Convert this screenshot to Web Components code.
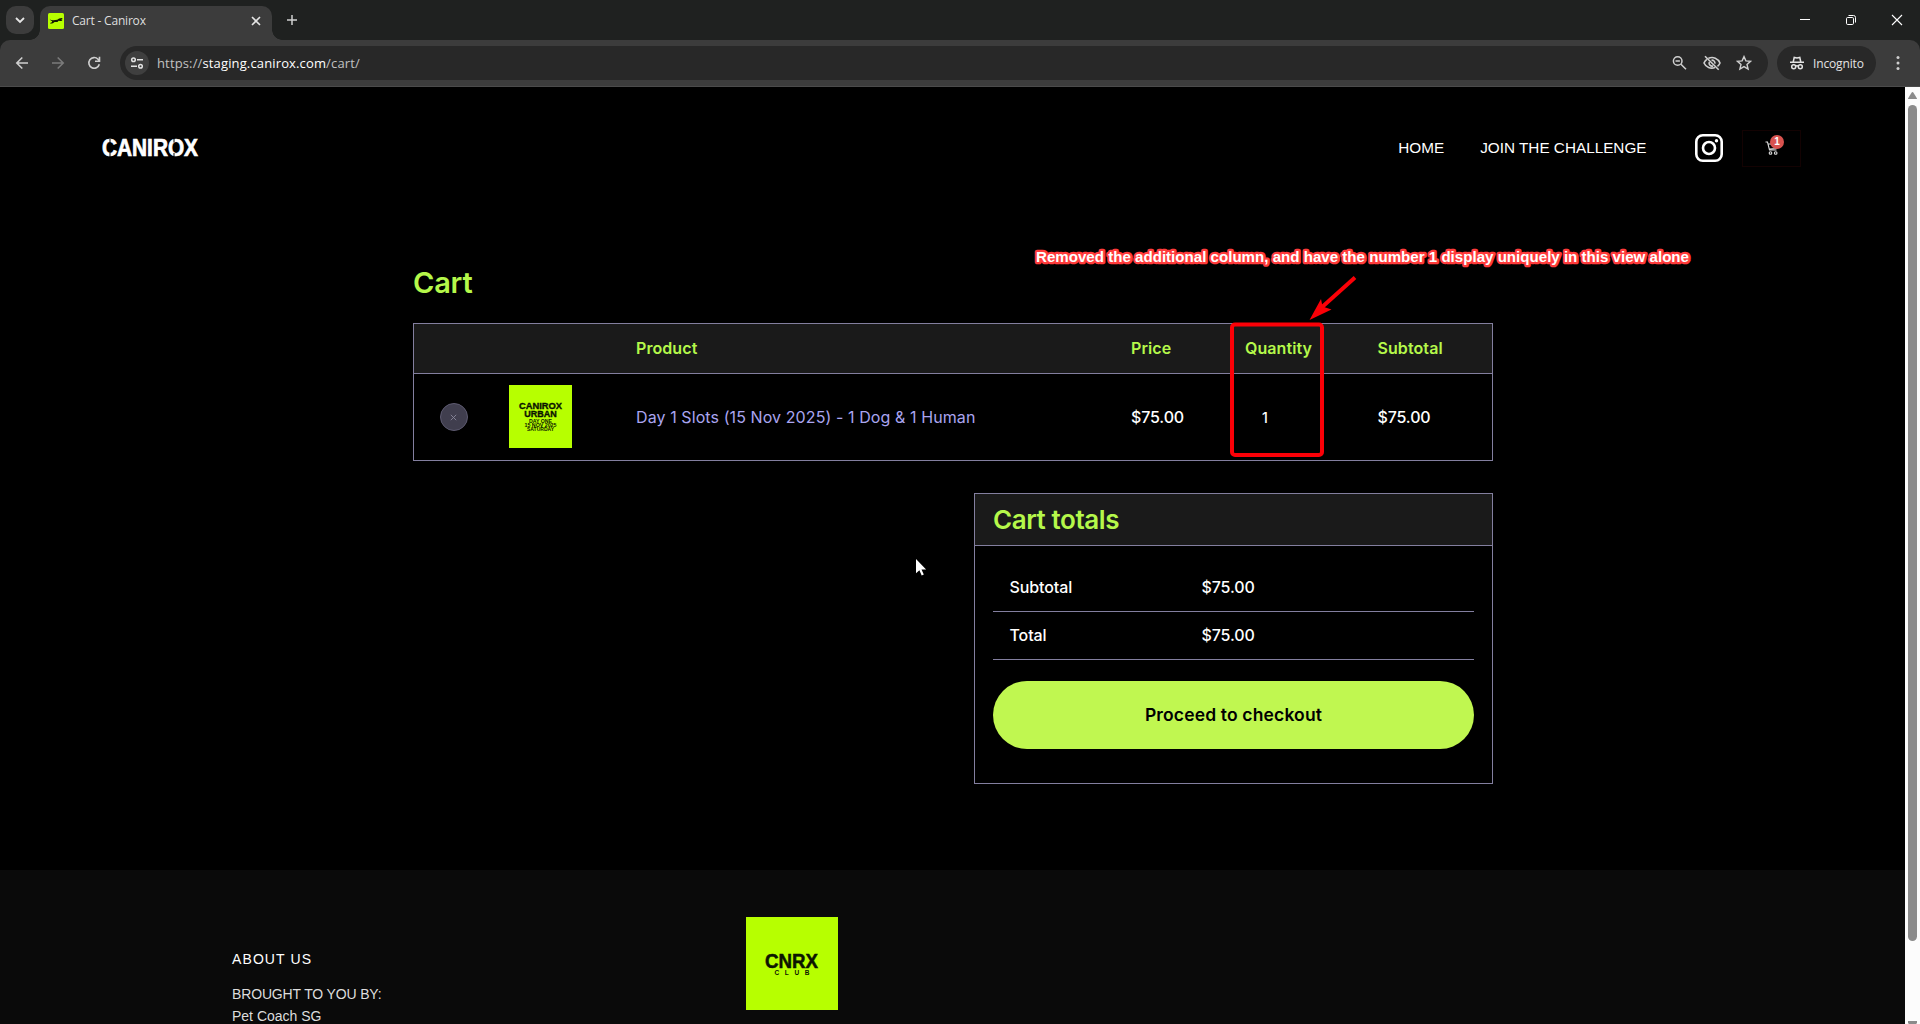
<!DOCTYPE html>
<html lang="en">
<head>
<meta charset="utf-8">
<title>Cart - Canirox</title>
<style>
html,body{margin:0;height:100%;overflow:hidden;background:#000}
body{width:1920px;height:1024px}
</style>
</head>
<body>
<canirox-app></canirox-app>
<script>
const define=(name,html)=>{
  const t=document.createElement('template');
  t.innerHTML=html;
  customElements.define(name,class extends HTMLElement{
    constructor(){super();this.attachShadow({mode:'open'}).append(t.content.cloneNode(true));}
  });
};

define('browser-tabs',`
<style>
:host{display:flex;height:40px;background:#1f2120;align-items:flex-start;position:relative;color:#dfdfdf}
.menu{width:28px;height:28px;margin:6px 6px 0 6px;border-radius:10px;background:#3c3c3c;display:flex;align-items:center;justify-content:center}
.tab{margin-top:6px;width:232px;height:34px;background:#3c3c3c;border-radius:10px 10px 0 0;display:flex;align-items:center;position:relative;box-sizing:border-box;padding:0 10px 5px 8px}
.tab:before,.tab:after{content:"";position:absolute;bottom:0;width:10px;height:10px}
.tab:before{left:-10px;background:radial-gradient(circle at 0 0,transparent 9.5px,#3c3c3c 10px)}
.tab:after{right:-10px;background:radial-gradient(circle at 100% 0,transparent 9.5px,#3c3c3c 10px)}
.title{font:12px "Open Sans",sans-serif;margin-left:8px;flex:1;letter-spacing:-.2px}
.plus{margin:14px 0 0 14px}
.win{margin-left:auto;display:flex;gap:34px;padding:12px 17px 0 0}
svg{display:block}
</style>
<div class="menu"><svg width="12" height="12" fill="none" stroke="#e6e6e6" stroke-width="1.8"><path d="M2 4l4 4 4-4"/></svg></div>
<div class="tab">
<svg width="16" height="16"><rect width="16" height="16" rx="1.5" fill="#b7ff00"/><path fill="#101800" d="M1.500 5.500l1.300 1.500 2.500.2 4-.5 1.800-1.200 2.700-.4 1 1-1.600.7 1.300 1.100-2.100.1-1.800-.2-1.100 1.300-2.900-.1-1.700 1.200-2.600.6.200-1 1.400-.5.300-1.100-1.500-.7z"/></svg>
<span class="title">Cart - Canirox</span>
<svg width="12" height="12" stroke="#e4e4e4" stroke-width="1.6"><path d="M2 2l8 8M10 2l-8 8"/></svg>
</div>
<svg class="plus" width="12" height="12" stroke="#d0d0d0" stroke-width="1.5"><path d="M6 1v10M1 6h10"/></svg>
<div class="win">
<svg width="14" height="16"><path d="M3 7.500h10" stroke="#fff"/></svg>
<svg width="12" height="16" fill="none" stroke="#fff"><rect x="1.5" y="5.5" width="7" height="7" rx="1.2"/><path d="M3.5 3.5h5a2 2 0 0 1 2 2v5"/></svg>
<svg width="12" height="16" stroke="#fff" stroke-width="1.1"><path d="M1 3l10 10M11 3L1 13"/></svg>
</div>`);

define('browser-toolbar',`
<style>
:host{display:flex;box-sizing:border-box;height:47px;background:#3c3c3c;border-bottom:1px solid #4b4b4b;border-radius:10px 10px 0 0;align-items:center;padding:0 20px 0 15px;color:#e3e3e3;font:13px "Open Sans",sans-serif}
.nav{display:flex;gap:22px;width:105px}
.omni{flex:1;height:34px;border-radius:17px;background:#282828;display:flex;align-items:center;padding:0 16px 0 5px}
.info{width:24px;height:24px;border-radius:50%;background:#3f3f3f;display:flex;align-items:center;justify-content:center}
.url{margin-left:8px;flex:1;color:#c1c1c1;white-space:nowrap;letter-spacing:.14px}
.url b{font-weight:400;color:#fff}
.acts{display:flex;gap:15.500px}
.inc{margin-left:9px;width:99px;height:34px;border-radius:17px;background:#282828;display:flex;align-items:center;box-sizing:border-box;padding-left:12px;gap:8px;font-size:12px;letter-spacing:-.15px}
.dots{margin-left:20px}
svg{display:block}
</style>
<div class="nav">
<svg width="14" height="14" fill="none" stroke="#cfcfcf" stroke-width="1.6"><path d="M13 7H2M7.3 1.5L1.8 7l5.5 5.5"/></svg>
<svg width="14" height="14" fill="none" stroke="#7b7b7b" stroke-width="1.6"><path d="M1 7h11M6.700 1.500L12.200 7l-5.500 5.500"/></svg>
<svg width="14" height="14" fill="none" stroke="#cfcfcf" stroke-width="1.6"><path d="M12.300 8.200A5.300 5.300 0 1 1 11 3.200L12.500 4.700M12.500 .8v4.400H8"/></svg>
</div>
<div class="omni">
<div class="info"><svg width="14" height="14" fill="none" stroke="#e3e3e3" stroke-width="1.5"><circle cx="3.500" cy="3.800" r="1.800"/><path d="M7 3.800h6M1 10.200h6"/><circle cx="10.500" cy="10.200" r="1.800"/></svg></div>
<div class="url">https://<b>staging.canirox.com</b>/cart/</div>
<div class="acts">
<svg width="15" height="16" fill="none" stroke="#cfcfcf" stroke-width="1.500"><circle cx="5.700" cy="6" r="4.300"/><path d="M9 9.300l5 5M3.500 6h4.400"/></svg>
<svg width="18" height="16" fill="none" stroke="#cfcfcf" stroke-width="1.600"><path d="M5.500 3.300A8.500 8.500 0 0 1 17 8a9 9 0 0 1-2.500 3.300M12 12.500A8.500 8.500 0 0 1 1 8a9 9 0 0 1 2.800-3.600M2 1.200l13.700 13.600"/><path d="M8.500 5.200a3 3 0 0 1 3.400 3.400M6.300 7a3 3 0 0 0 3.800 3.900"/></svg>
<svg width="16" height="16" fill="none" stroke="#cfcfcf" stroke-width="1.400"><path d="M8 1.600l1.900 4.300 4.600.4-3.500 3.100 1.100 4.600L8 11.600 3.900 14 5 9.400 1.500 6.300l4.600-.4z"/></svg>
</div>
</div>
<div class="inc"><svg width="16" height="16" fill="none" stroke="#e3e3e3" stroke-width="1.500"><path d="M1 7.300h14M4.200 7l1-4.500 2.800.6 2.800-.6 1 4.500"/><circle cx="4.700" cy="11.700" r="2"/><circle cx="11.300" cy="11.700" r="2"/><path d="M6.700 11.200q1.300-.8 2.600 0"/></svg><span>Incognito</span></div>
<svg class="dots" width="4" height="16" fill="#cfcfcf"><circle cx="2" cy="2.500" r="1.500"/><circle cx="2" cy="8" r="1.500"/><circle cx="2" cy="13.500" r="1.500"/></svg>`);

define('site-header',`
<style>
:host{display:flex;align-items:center;box-sizing:border-box;height:122px;padding:0 104px 0 98px;color:#fff}
.brand{flex:1;display:flex}
.menu{display:flex;gap:36px;font:15.300px "Liberation Sans",Arial,sans-serif;white-space:nowrap}
.ig{margin-left:47.500px}
.cart{margin-left:18px;width:59px;height:37px;border:1px solid #130202;box-sizing:border-box;position:relative;display:flex;justify-content:center;align-items:center}
.badge{position:absolute;left:27px;top:4px;width:14px;height:14px;border-radius:50%;background:#d9534f;font:bold 10px/13px "Liberation Sans",Arial,sans-serif;text-align:center}
svg{display:block}
</style>
<div class="brand"><svg width="110" height="40"><text x="4" y="28.200" textLength="96" lengthAdjust="spacingAndGlyphs" font-family="Liberation Sans" font-weight="700" font-size="23" fill="#fff" stroke="#fff" stroke-width=".7">CANIROX</text><path stroke="#000" stroke-width="1" d="M12 11v3.500M12 25v4M76 11v3.500M76 25v4"/></svg></div>
<div class="menu"><span>HOME</span><span>JOIN THE CHALLENGE</span></div>
<svg class="ig" width="30" height="30" fill="none" stroke="#fff" stroke-width="2.600"><rect x="2.300" y="2.300" width="25.400" height="25.400" rx="6.500"/><circle cx="15" cy="15" r="6"/><circle cx="22.500" cy="7.800" r="1.700" fill="#fff" stroke="none"/></svg>
<div class="cart"><svg width="14" height="14" fill="none" stroke="#ddd" stroke-width="1.100"><path d="M.5 1h2l2 8h7M3 3h9.500l-1.300 4.500L4.300 8"/><circle cx="5.500" cy="12" r="1.300"/><circle cx="10.700" cy="12" r="1.300"/></svg><span class="badge">1</span></div>`);

define('slot-poster',`
<style>
:host{display:block;width:63px;height:63px;background:#b7ff00;margin-top:-1px}
svg{display:block}
text{font-family:"Liberation Sans",Arial,sans-serif;font-weight:700;fill:#0b1400;text-anchor:middle}
</style>
<svg width="63" height="63"><g stroke="#0b1400" stroke-width=".35"><text x="31.500" y="23.700" font-size="9" textLength="43" lengthAdjust="spacingAndGlyphs">CANIROX</text><text x="31.500" y="32.200" font-size="9" textLength="32.500" lengthAdjust="spacingAndGlyphs">URBAN</text></g><text x="31.500" y="37.700" font-size="4.900" textLength="23" lengthAdjust="spacingAndGlyphs">DAY ONE</text><text x="31.500" y="42" font-size="4.900" textLength="32" lengthAdjust="spacingAndGlyphs">15 NOV 2025</text><text x="31.500" y="46.400" font-size="4.900" textLength="27" lengthAdjust="spacingAndGlyphs">SATURDAY</text></svg>`);

define('cart-table',`
<style>
:host{display:block;box-sizing:border-box;width:1080px;border:1px solid #837f9f;font:500 16px Inter,sans-serif;color:#fff}
.row{display:grid;grid-template-columns:95px 127px 495px 114px 132.500px 1fr;align-items:center}
.head{box-sizing:border-box;height:50px;padding-bottom:1px;background:#1a1a1a;border-bottom:1px solid #837f9f;color:#b5f84a;font-weight:600;letter-spacing:.08px}
.body{height:86px}
.price{letter-spacing:-.15px}
.x{margin-left:25.500px;width:28px;height:28px;border-radius:50%;box-sizing:border-box;border:1px solid #5d5a70;background:#403e4e;display:flex;align-items:center;justify-content:center}
.name{color:#aaa5f0;font-weight:400;letter-spacing:.09px}
.qty{padding-left:17px;font-size:14px}
</style>
<div class="row head"><i></i><i></i><span>Product</span><span>Price</span><span>Quantity</span><span>Subtotal</span></div>
<div class="row body"><div class="x"><svg width="7" height="7" stroke="#8a889b" stroke-width=".9"><path d="M.8 .8l5.400 5.400M6.200 .8L.8 6.200"/></svg></div><slot-poster></slot-poster><span class="name">Day 1 Slots (15 Nov 2025) - 1 Dog &amp; 1 Human</span><span class="price">$75.00</span><span class="qty">1</span><span class="price">$75.00</span></div>`);

define('total-row',`
<style>
:host{display:grid;box-sizing:border-box;grid-template-columns:192px 1fr;align-items:center;height:48px;padding:0 0 2px 16.500px;border-bottom:1px solid #837f9f;font:500 16px Inter,sans-serif;color:#fff;letter-spacing:-.1px}
</style><slot name="label"></slot><slot></slot>`);

define('cart-totals',`
<style>
:host{display:block;box-sizing:border-box;width:519px;height:291px;border:1px solid #837f9f}
h2{margin:0;box-sizing:border-box;height:52px;padding-left:18px;background:#1a1a1a;border-bottom:1px solid #837f9f;font:600 26px/52px Inter,sans-serif;color:#b5f84a;letter-spacing:-.42px}
.in{padding:18px 18px 0}
.btn{margin-top:21px;height:68px;border-radius:34px;background:#c0f750;color:#000;font:600 17.500px/68px Inter,sans-serif;letter-spacing:.15px;text-align:center}
</style>
<h2>Cart totals</h2>
<div class="in"><total-row><span slot="label">Subtotal</span>$75.00</total-row><total-row><span slot="label">Total</span>$75.00</total-row><div class="btn">Proceed to checkout</div></div>`);

define('site-footer',`
<style>
:host{display:flex;height:154px;background:#0a0a0a;overflow:hidden;color:#fff;font:14px/22px "Liberation Sans",Arial,sans-serif}
.about{margin-left:232px;width:514px;padding-top:78px}
h3{margin:0 0 13px;font:400 14px/22px "Liberation Sans",Arial,sans-serif;letter-spacing:1.100px}
p{margin:0;color:#ddd;letter-spacing:-.15px}
p+p{letter-spacing:0}
.logo{margin-top:47px;width:92px;height:93px;background:#b7ff00}
text{font-family:"Liberation Sans",Arial,sans-serif;font-weight:700;fill:#0c1500;stroke:#0c1500}
</style>
<div class="about"><h3>ABOUT US</h3><p>BROUGHT TO YOU BY:</p><p>Pet Coach SG</p></div>
<div class="logo"><svg width="92" height="93"><text x="19" y="51.200" font-size="19.500" stroke-width=".5" textLength="53" lengthAdjust="spacingAndGlyphs">CNRX</text><text x="28.500" y="58.200" font-size="6.500" stroke-width="0" textLength="35">CLUB</text></svg></div>`);

define('page-scrollbar',`
<style>
:host{display:flex;flex-direction:column;align-items:center;width:15px;background:#fcfcfc;overflow:hidden}
.thumb{flex:none;margin-top:6px;width:9px;height:836px;border-radius:5px;background:#8b8b8b}
svg{display:block;margin-top:5px;flex:none}
.down{margin-top:80px}
</style>
<svg width="9" height="7"><path fill="#8b8b8b" d="M4.500 0Q5 0 5.500 .8L9 6.500Q9 7 8.500 7H.5Q0 7 0 6.500L3.500 .8Q4 0 4.500 0z"/></svg>
<div class="thumb"></div>
<svg class="down" width="9" height="7"><path fill="#8b8b8b" d="M4.500 7L0 2V0h9v2z"/></svg>`);

define('review-notes',`
<style>
:host{position:absolute;inset:0;pointer-events:none}
svg{display:block}
text{font-family:"Liberation Sans",Arial,sans-serif;font-weight:700}
</style>
<svg width="1920" height="1024">
<text x="1036" y="262.300" font-size="15" textLength="653" lengthAdjust="spacingAndGlyphs" fill="#fff" stroke="#ff3b3b" stroke-width="4.600" stroke-linejoin="round" paint-order="stroke">Removed the additional column, and have the number 1 display uniquely in this view alone</text>
<rect x="1232" y="324.500" width="90" height="130.500" rx="3" fill="none" stroke="#fb0007" stroke-width="4"/>
<path d="M1355 277.500L1321 308" stroke="#fb0007" stroke-width="4"/>
<path fill="#fb0007" d="M1309.500 320L1321 299L1322.500 306.500L1331.500 309.500z"/>
<path d="M916 559v14.300l3.400-3.100 2.300 5.200 2.100-.9-2.300-5.100h4.600z" fill="#fff"/>
</svg>`);

define('canirox-app',`
<style>
:host{display:flex;flex-direction:column;width:1920px;height:1024px;position:relative;overflow:hidden;background:#1f2120}
.view{display:flex;flex:1;min-height:0}
.page{flex:1;background:#000;display:flex;flex-direction:column}
main{box-sizing:border-box;height:661px;width:1080px;margin-left:413px;padding-top:50px;display:flex;flex-direction:column}
h1{margin:0 0 17px;height:47px;font:600 29px/47px Inter,sans-serif;color:#b5f84a;letter-spacing:-.2px}
cart-totals{align-self:flex-end;margin-top:32px}
</style>
<browser-tabs></browser-tabs><browser-toolbar></browser-toolbar>
<div class="view"><div class="page"><site-header></site-header><main><h1>Cart</h1><cart-table></cart-table><cart-totals></cart-totals></main><site-footer></site-footer></div><page-scrollbar></page-scrollbar></div>
<review-notes></review-notes>`);
</script>
</body>
</html>
